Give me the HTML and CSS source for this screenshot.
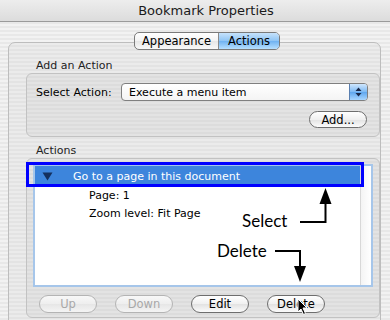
FILE: index.html
```html
<!DOCTYPE html>
<html>
<head>
<meta charset="utf-8">
<link rel="stylesheet" href="styles.css">
</head>
<body>
<div class="window">
  <div class="titlebar">Bookmark Properties</div>
  <div class="panel">
    <div class="tabs">
      <div class="tab">Appearance</div>
      <div class="tab tab-active">Actions</div>
    </div>
    <div class="section-label">Add an Action</div>
    <div class="group group-add">
      <div class="row-select">
        <span class="field-label">Select Action:</span>
        <div class="popup">
          <span class="popup-text">Execute a menu item</span>
          <span class="stepper">
            <svg width="9" height="12" viewBox="0 0 9 12"><path d="M4.5 1.5 L7.5 5 H1.5 Z M4.5 10.5 L7.5 7 H1.5 Z" fill="#1a2a4a"/></svg>
          </span>
        </div>
      </div>
      <div class="row-add">
        <div class="btn btn-add">Add...</div>
      </div>
    </div>
    <div class="section-label section-label-actions">Actions</div>
    <div class="group group-actions">
      <div class="list">
        <div class="list-body">
          <div class="list-row selected">
            <svg class="disclosure" width="11" height="9" viewBox="0 0 11 9"><path d="M0.5 0.5 H10.5 L5.5 8.5 Z" fill="#14305e"/></svg>
            <span>Go to a page in this document</span>
          </div>
          <div class="list-row sub">Page: 1</div>
          <div class="list-row sub">Zoom level: Fit Page</div>
        </div>
        <div class="list-scroll"></div>
      </div>
      <div class="buttons">
        <div class="btn btn-disabled">Up</div>
        <div class="btn btn-disabled">Down</div>
        <div class="btn">Edit</div>
        <div class="btn">Delete</div>
      </div>
    </div>
  </div>

  <div class="highlight-rect"></div>
  <div class="note note-select">Select</div>
  <div class="note note-delete">Delete</div>
  <svg class="arrows" width="390" height="320" viewBox="0 0 390 320">
    <path d="M300 222 H325.5 V200" fill="none" stroke="#000" stroke-width="2"/>
    <path d="M325.5 188 L331.5 204 H319.5 Z" fill="#000"/>
    <path d="M275 251 H300 V268" fill="none" stroke="#000" stroke-width="2"/>
    <path d="M300 282 L294 266 H306 Z" fill="#000"/>
  </svg>
  <svg class="cursor" width="12" height="18" viewBox="0 0 12 18">
    <path d="M1 1 V14 L4 11 L6.5 16.5 L8.5 15.5 L6 10 H10 Z" fill="#000" stroke="#fff" stroke-width="1"/>
  </svg>
</div>
</body>
</html>
```
FILE: styles.css
```css
html, body {
  margin: 0;
  padding: 0;
}
body {
  width: 390px;
  height: 320px;
  overflow: hidden;
  font-family: "DejaVu Sans", "Liberation Sans", sans-serif;
  font-size: 11px;
  color: #000;
}
.window {
  position: relative;
  width: 390px;
  height: 320px;
  overflow: hidden;
  background: repeating-linear-gradient(to bottom, #f2f2f2 0px, #f2f2f2 2px, #e8e8e8 2px, #e8e8e8 4px);
  display: flex;
  flex-direction: column;
}
.window > *, .panel > *, .group > * {
  flex-shrink: 0;
}
.titlebar {
  height: 21px;
  border-bottom: 1px solid #9a9a9a;
  background: linear-gradient(to bottom, #ededed, #dcdcdc);
  display: flex;
  align-items: center;
  justify-content: center;
  padding-left: 22px;
  font-size: 13px;
  color: #1a1a1a;
}
.panel {
  margin: 20px 0 0 8px;
  width: 373px;
  height: 290px;
  border: 1px solid #bdbdbd;
  border-radius: 7px;
  background: repeating-linear-gradient(to bottom, #ebebeb 0px, #ebebeb 2px, #e3e3e3 2px, #e3e3e3 4px);
  display: flex;
  flex-direction: column;
  padding: 0 1px 0 17px;
  box-sizing: border-box;
}
.tabs {
  display: flex;
  margin: -11px 0 0 108px;
  height: 18px;
  width: 146px;
  border: 1px solid #7a7a7a;
  border-radius: 5px;
  overflow: hidden;
  box-sizing: border-box;
  background: linear-gradient(to bottom, #ffffff, #f3f3f3 50%, #e6e6e6 51%, #f9f9f9);
  font-size: 11.5px;
}
.tab {
  display: flex;
  align-items: center;
  justify-content: center;
  width: 83px;
  border-right: 1px solid #8a8a8a;
}
.tab-active {
  flex: 1;
  border-right: 0;
  background: linear-gradient(to bottom, #c6e2fb, #8ec4f4 50%, #6fb2f1 51%, #b7e0ff);
}
.section-label {
  margin: 9px 0 0 10px;
  height: 13px;
  line-height: 13px;
  color: #222;
}
.section-label-actions {
  margin-top: 7px;
}
.group {
  margin-top: 1px;
  border: 1px solid #c2c2c2;
  border-radius: 6px;
  background: repeating-linear-gradient(to bottom, #e3e3e3 0px, #e3e3e3 2px, #dcdcdc 2px, #dcdcdc 4px);
  box-sizing: border-box;
  width: 354px;
}
.group-add {
  height: 64px;
  padding: 9px 11px 0 9px;
  display: flex;
  flex-direction: column;
}
.row-select {
  display: flex;
  align-items: center;
  height: 18px;
}
.field-label {
  width: 85px;
}
.popup {
  flex: 1;
  height: 18px;
  box-sizing: border-box;
  border: 1px solid #7f7f7f;
  border-radius: 4px;
  background: linear-gradient(to bottom, #ffffff, #f4f4f4);
  display: flex;
  align-items: center;
  padding-left: 7px;
  overflow: hidden;
}
.popup-text {
  flex: 1;
}
.stepper {
  width: 17px;
  height: 16px;
  display: flex;
  align-items: center;
  justify-content: center;
  background: linear-gradient(to bottom, #cfe6fd, #7cb9f3 50%, #5ea6ee 51%, #a8d6ff);
  border-left: 1px solid #5a7fb0;
}
.row-add {
  display: flex;
  justify-content: flex-end;
  margin-top: 10px;
  padding-right: 1px;
}
.btn {
  width: 58px;
  height: 18px;
  box-sizing: border-box;
  border: 1px solid #6e6e6e;
  border-radius: 9px;
  background: linear-gradient(to bottom, #ffffff, #f0f0f0 50%, #e2e2e2 51%, #fbfbfb);
  display: flex;
  align-items: center;
  justify-content: center;
  font-size: 11.5px;
}
.btn-add {
  height: 17px;
}
.btn-disabled {
  border-color: #b4b4b4;
  color: #a8a8a8;
  background: linear-gradient(to bottom, #f8f8f8, #eeeeee 50%, #e6e6e6 51%, #f4f4f4);
}
.group-actions {
  height: 160px;
  padding: 5px 6px 0 6px;
  display: flex;
  flex-direction: column;
}
.list {
  height: 123px;
  box-sizing: border-box;
  border: 2px solid #a6c6ea;
  background: #fff;
  display: flex;
}
.list-body {
  flex: 1;
  display: flex;
  flex-direction: column;
}
.list-scroll {
  width: 10px;
  border-left: 1px solid #d8d8d8;
  background: linear-gradient(to right, #f4f4f4, #ffffff);
}
.list-row {
  height: 18px;
  display: flex;
  align-items: center;
  flex-shrink: 0;
}
.list-row.selected {
  height: 20px;
  background: #3d85dc;
  color: #fff;
  font-size: 11px;
  padding-left: 7px;
}
.disclosure {
  margin-right: 20px;
}
.list-row.sub {
  padding-left: 54px;
}
.buttons {
  display: flex;
  gap: 18px;
  margin-top: 8px;
  padding-left: 6px;
}
.highlight-rect {
  position: absolute;
  left: 26px;
  top: 162px;
  width: 338px;
  height: 25px;
  border: 3px solid #0000ff;
  box-sizing: border-box;
}
.note {
  position: absolute;
  font-family: "Lato", "Open Sans", sans-serif;
  font-size: 17px;
  color: #000;
  line-height: 20px;
}
.note-select {
  left: 242px;
  top: 211px;
}
.note-delete {
  left: 217px;
  top: 241px;
}
.arrows {
  position: absolute;
  left: 0;
  top: 0;
}
.cursor {
  position: absolute;
  left: 297px;
  top: 298px;
}
```
